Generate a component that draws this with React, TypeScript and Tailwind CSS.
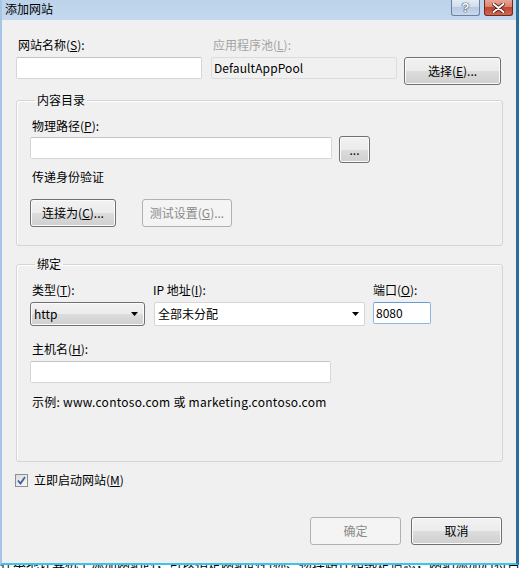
import React from "react";

const BTN_BASE =
  "flex items-center border border-[#707070] rounded-[3px] bg-[linear-gradient(#f2f2f2_0%,#ebebeb_50%,#dddddd_50%,#cfcfcf_100%)] shadow-[inset_0_0_0_1px_#fbfbfb] text-black";
const BTN = BTN_BASE + " justify-center";
const BTN_DIS =
  "flex items-center justify-center border border-[#adb2b5] rounded-[3px] bg-[#f4f4f4] text-[#8a8a8a]";
const INPUT = "h-[22px] border border-[#d6d6d6] border-t-[#c4c4c4] rounded-[2px] bg-white";

function Arrow() {
  return (
    <svg width="7" height="4" viewBox="0 0 7 4">
      <path d="M0 0H7L3.5 4Z" fill="#000" />
    </svg>
  );
}

function Label({ children, className = "" }: { children: React.ReactNode; className?: string }) {
  return <div className={"h-4 leading-4 whitespace-nowrap " + className}>{children}</div>;
}

export default function App() {
  return (
    <div className="w-[520px] h-[568px] overflow-hidden bg-white relative font-['Noto_Sans_CJK_SC','Microsoft_YaHei',sans-serif] text-[12px] text-black">
      <div className="w-[519px] h-[565px] flex flex-col border-l-2 border-l-[#a7c5e8] border-r-[3px] border-r-[#2a6f9a] border-b-[2px] border-b-[#3ec3ee] bg-[#f0f0f0]">
        {/* title bar */}
        <div className="h-5 flex items-start justify-between bg-[linear-gradient(#bcd3eb,#c4d8ee)] pl-[3px] pr-[3px]">
          <div className="leading-5 text-[12px] -mt-[1px]">添加网站</div>
          <div className="flex gap-[4px]">
            <div className="w-[29px] h-[16px] rounded-b-[3px] border border-t-0 border-[#6c819d] bg-[linear-gradient(#e3ecf6_0%,#cfdcec_50%,#b7cae2_50%,#c9d9ec_100%)] flex items-center justify-center">
              <span className="text-white font-bold text-[13px] leading-none [text-shadow:0_0_1px_#2b3c55,0_0_1px_#2b3c55,0_0_1px_#2b3c55] font-['Liberation_Sans',sans-serif]">?</span>
            </div>
            <div className="w-[29px] h-[16px] rounded-b-[3px] border border-t-0 border-[#6b2a24] bg-[linear-gradient(#e8a495_0%,#d7806f_50%,#c1442f_50%,#cf6a4f_100%)] flex items-center justify-center">
              <svg width="13" height="10" viewBox="0 0 13 10">
                <path d="M1.5 1L11.5 9M11.5 1L1.5 9" stroke="#4a1a14" strokeWidth="3.6" strokeLinecap="round" />
                <path d="M1.5 1L11.5 9M11.5 1L1.5 9" stroke="#fff" strokeWidth="2" strokeLinecap="round" />
              </svg>
            </div>
          </div>
        </div>

        {/* client */}
        <div className="flex-1 flex flex-col pl-[14px]">
          {/* top row */}
          <div className="flex items-start pt-[17px]">
            <div className="w-[186px] flex flex-col">
              <Label className="pl-[2px]">网站名称(<u>S</u>):</Label>
              <div className={INPUT + " mt-1"} />
            </div>
            <div className="w-[186px] ml-[9px] flex flex-col">
              <Label className="pl-[2px] text-[#a3a3a3]">应用程序池(<u>L</u>):</Label>
              <div className="mt-1 h-[22px] border border-[#dcdcdc] rounded-[2px] bg-[#f0f0f0] pl-[2px] leading-[20px] tracking-[0.1px]">DefaultAppPool</div>
            </div>
            <div className={BTN + " ml-[7px] mt-5 w-[97px] h-7"}>选择(<u>E</u>)...</div>
          </div>

          {/* 内容目录 */}
          <fieldset className="mt-[7px] w-[487px] border border-[#d5d5d5] rounded-[3px] shadow-[inset_1px_1px_0_#fff] pl-[13px] pb-[18px]">
            <legend className="ml-[5px] px-[2px] leading-4">内容目录</legend>
            <Label className="mt-[10px] pl-[2px]">物理路径(<u>P</u>):</Label>
            <div className="flex items-start mt-[2px]">
              <div className={INPUT + " w-[302px] mt-px"} />
              <div className={BTN + " ml-[7px] w-[31px] h-[27px] items-end pb-[6px] leading-none"}>...</div>
            </div>
            <Label className="mt-[6px] pl-[2px]">传递身份验证</Label>
            <div className="flex mt-[14px]">
              <div className={BTN + " w-[86px] h-7"}>连接为(<u>C</u>)...</div>
              <div className={BTN_DIS + " ml-[26px] w-[90px] h-7"}>测试设置(<u>G</u>)...</div>
            </div>
          </fieldset>

          {/* 绑定 */}
          <fieldset className="mt-[10px] w-[487px] border border-[#d5d5d5] rounded-[3px] shadow-[inset_1px_1px_0_#fff] pl-[13px] pb-[51px]">
            <legend className="ml-[5px] px-[2px] leading-4">绑定</legend>
            <div className="flex items-start mt-[10px]">
              <div className="w-[115px] flex flex-col">
                <Label className="pl-[2px]">类型(<u>T</u>):</Label>
                <div className={BTN_BASE + " mt-1 h-6 justify-between pl-[3px] pr-[6px]"}>
                  <span className="leading-5">http</span>
                  <Arrow />
                </div>
              </div>
              <div className="w-[211px] ml-[9px] flex flex-col">
                <Label className="-ml-px">IP 地址(<u>I</u>):</Label>
                <div className="mt-1 h-6 border border-[#d6d6d6] rounded-[2px] bg-white flex items-center justify-between pl-[3px] pr-[5px]">
                  <span className="leading-5">全部未分配</span>
                  <Arrow />
                </div>
              </div>
              <div className="w-[58px] ml-[8px] flex flex-col">
                <Label>端口(<u>O</u>):</Label>
                <div className="mt-1 h-[22px] border border-[#8db7e0] border-t-[#6a9dcf] rounded-[2px] bg-white pl-[2px] leading-[20px]">8080</div>
              </div>
            </div>
            <Label className="mt-[15px] pl-[2px]">主机名(<u>H</u>):</Label>
            <div className={INPUT + " mt-1 w-[301px]"} />
            <Label className="mt-[11px] pl-[2px] tracking-[0.25px]">示例: www.contoso.com 或 marketing.contoso.com</Label>
          </fieldset>

          {/* checkbox */}
          <div className="flex items-center mt-[10px] h-4">
            <div className="w-[13px] h-[13px] border border-[#8e8f8f] bg-[linear-gradient(135deg,#dcdcdc,#f8f8f8)] flex items-center justify-center -ml-px">
              <svg width="9" height="9" viewBox="0 0 9 9">
                <path d="M1 4.5L3.5 7.5L8 1" stroke="#3c5f9a" strokeWidth="1.8" fill="none" />
              </svg>
            </div>
            <span className="ml-[6px] leading-4">立即启动网站(<u>M</u>)</span>
          </div>

          {/* buttons */}
          <div className="flex justify-end mt-[29px] pr-[14px]">
            <div className={BTN_DIS + " w-[91px] h-7"}>确定</div>
            <div className={BTN + " ml-[10px] w-[91px] h-7"}>取消</div>
          </div>
        </div>
      </div>
      <div className="h-[3px] overflow-hidden">
        <div className="leading-[14px] -mt-[9px] whitespace-nowrap text-[13px]">在本地计算机上添加网站时，可以指定网站的名称、物理路径和绑定信息，网站添加后将自动启动。</div>
      </div>
    </div>
  );
}
